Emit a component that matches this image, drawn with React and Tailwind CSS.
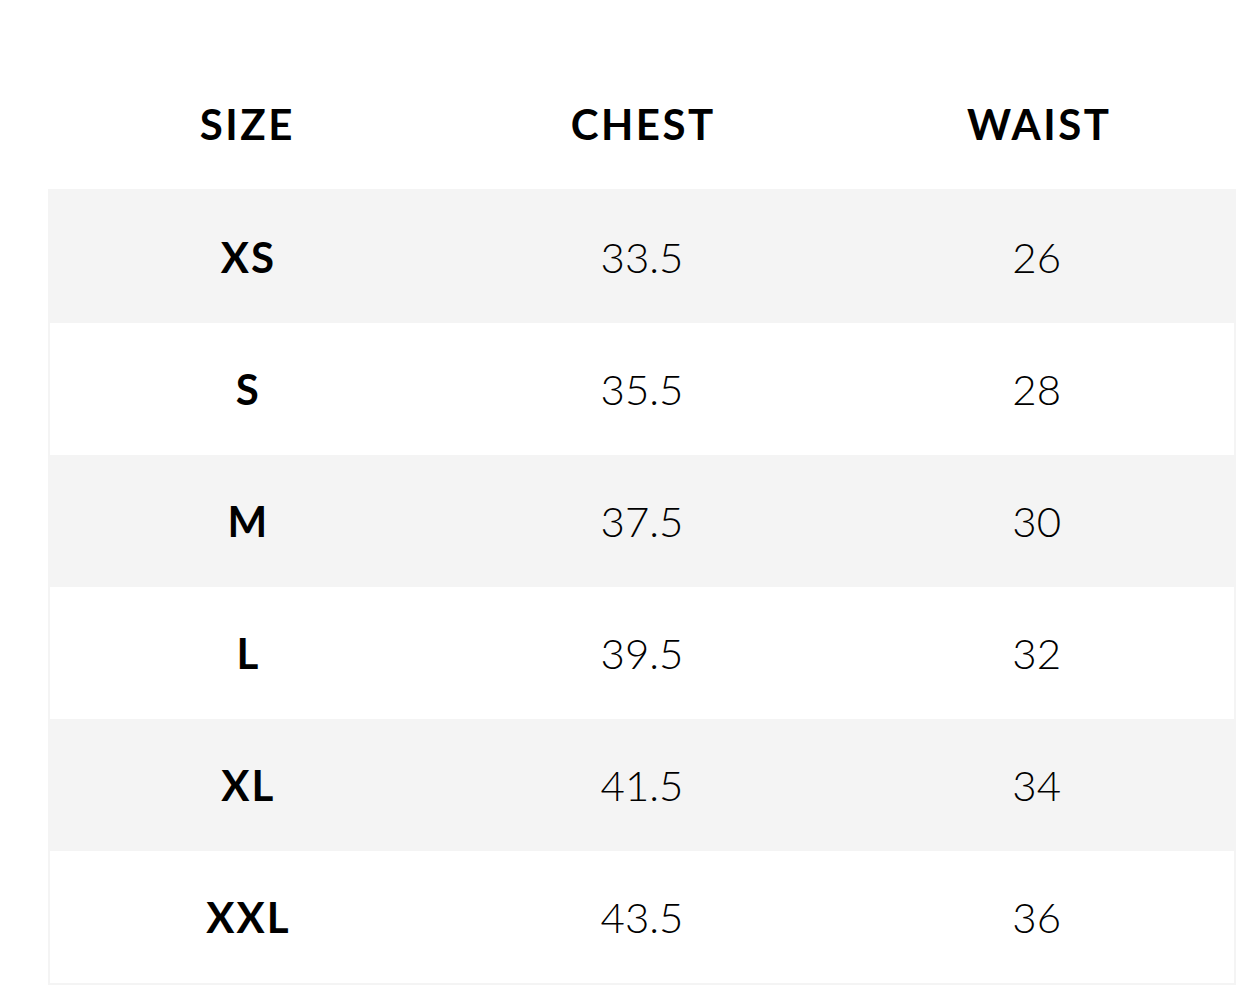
export default function App() {
  const rows = [
    ["XS", "33.5", "26"],
    ["S", "35.5", "28"],
    ["M", "37.5", "30"],
    ["L", "39.5", "32"],
    ["XL", "41.5", "34"],
    ["XXL", "43.5", "36"],
  ];
  return (
    <div className="min-h-[999px] bg-white pt-[60px] text-black" style={{ fontFamily: "Lato, 'Open Sans', sans-serif" }}>
      <div className="ml-[48px] w-[1188px]">
        <div className="grid h-[129px] grid-cols-3 items-center pb-[2px] text-center text-[42px] font-bold leading-none tracking-[0.06em]">
          <div className="pl-[0.06em]">SIZE</div>
          <div className="pl-[0.06em]">CHEST</div>
          <div className="pl-[0.06em]">WAIST</div>
        </div>
        <div className="border-2 border-t-0 border-[#f4f4f4]">
          {rows.map((r, i) => (
            <div
              key={r[0]}
              className={`grid grid-cols-3 items-center text-center text-[42px] leading-none ${i === 0 ? "h-[134px] pt-[2px]" : "h-[132px]"} ${i % 2 === 0 ? "bg-[#f4f4f4]" : "bg-white"}`}
            >
              <div className="pl-[0.05em] font-bold tracking-[0.05em]">{r[0]}</div>
              <div className="font-light">{r[1]}</div>
              <div className="font-light">{r[2]}</div>
            </div>
          ))}
        </div>
      </div>
    </div>
  );
}
